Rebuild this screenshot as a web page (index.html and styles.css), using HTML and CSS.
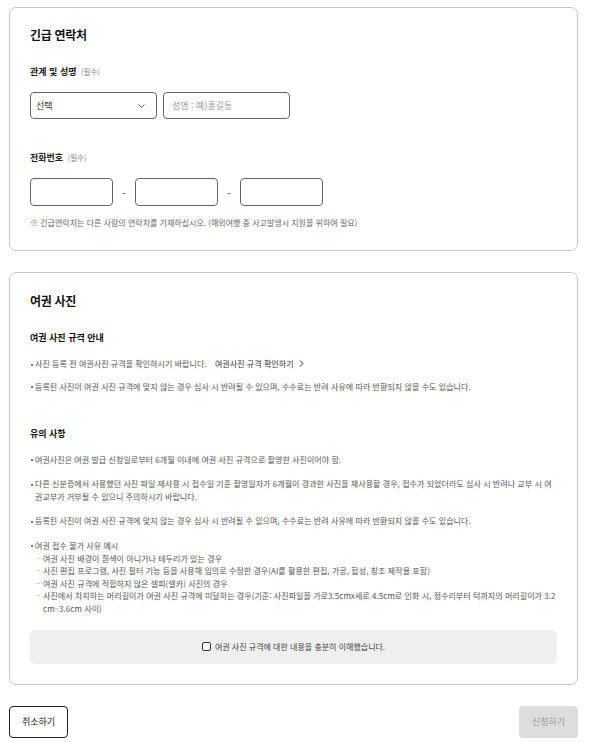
FILE: index.html
```html
<!DOCTYPE html>
<html lang="ko">
<head>
    <meta charset="UTF-8">
    <meta name="viewport" content="width=device-width, initial-scale=1.0">
    <title>여권 신청</title>
    <link rel="stylesheet" href="styles.css">
</head>
<body>

    <div class="page">
        <section class="card card-contact">
            <h2 class="card-title">긴급 연락처</h2>

            <p class="field-label">관계 및 성명 <span class="required">(필수)</span></p>
            <div class="row-name">
                <div class="select-box">
                    <span>선택</span>
                    <svg class="chevron-down" width="7" height="4" viewBox="0 0 7 4">
                        <path d="M0.5 0.5 L3.5 3.3 L6.5 0.5" fill="none" stroke="#555" stroke-width="1"/>
                    </svg>
                </div>
                <div class="text-box placeholder">성명 : 예)홍길동</div>
            </div>

            <p class="field-label label-phone">전화번호 <span class="required">(필수)</span></p>
            <div class="row-phone">
                <div class="phone-box"></div>
                <span class="dash">-</span>
                <div class="phone-box"></div>
                <span class="dash">-</span>
                <div class="phone-box"></div>
            </div>

            <p class="note">※ 긴급연락처는 다른 사람의 연락처를 기재하십시오. (해외여행 중 사고발생시 지원을 위하여 필요)</p>
        </section>

        <section class="card card-photo">
            <h2 class="card-title">여권 사진</h2>

            <h3 class="sub-title">여권 사진 규격 안내</h3>
            <ul class="info-list guide-list">
                <li>사진 등록 전 여권사진 규격을 확인하시기 바랍니다. <a class="guide-link">여권사진 규격 확인하기
                    <svg width="5" height="7" viewBox="0 0 5 7"><path d="M1 0.5 L4 3.5 L1 6.5" fill="none" stroke="#333" stroke-width="1"/></svg></a></li>
                <li>등록된 사진이 여권 사진 규격에 맞지 않는 경우 심사 시 반려될 수 있으며, 수수료는 반려 사유에 따라 반환되지 않을 수도 있습니다.</li>
            </ul>

            <h3 class="sub-title sub-notice">유의 사항</h3>
            <ul class="info-list">
                <li>여권사진은 여권 발급 신청일로부터 6개월 이내에 여권 사진 규격으로 촬영한 사진이어야 함.</li>
                <li>다른 신분증에서 사용했던 사진 파일 재사용 시 접수일 기준 촬영일자가 6개월이 경과한 사진을 재사용할 경우, 접수가 되었더라도 심사 시 반려나 교부 시 여권교부가 거부될 수 있으니 주의하시기 바랍니다.</li>
                <li>등록된 사진이 여권 사진 규격에 맞지 않는 경우 심사 시 반려될 수 있으며, 수수료는 반려 사유에 따라 반환되지 않을 수도 있습니다.</li>
                <li>여권 접수 불가 사유 예시
                    <ul class="sub-list">
                        <li>여권 사진 배경이 흰색이 아니거나 테두리가 있는 경우</li>
                        <li>사진 편집 프로그램, 사진 필터 기능 등을 사용해 임의로 수정한 경우(AI를 활용한 편집, 가공, 합성, 창조 제작물 포함)</li>
                        <li>여권 사진 규격에 적합하지 않은 셀피(셀카) 사진의 경우</li>
                        <li>사진에서 차지하는 머리길이가 여권 사진 규격에 미달하는 경우(기준: 사진파일을 가로3.5cmx세로 4.5cm로 인화 시, 정수리부터 턱까지의 머리길이가 3.2 cm~3.6cm 사이)</li>
                    </ul>
                </li>
            </ul>

            <label class="agree-box">
                <span class="check"></span>
                여권 사진 규격에 대한 내용을 충분히 이해했습니다.
            </label>
        </section>

        <div class="actions">
            <button class="btn btn-cancel">취소하기</button>
            <button class="btn btn-submit">신청하기</button>
        </div>
    </div>

</body>
</html>
```

FILE: styles.css
```css
body {
    margin: 0;
    font-family: "Noto Sans CJK KR", "Noto Sans", sans-serif;
    color: #222;
    background: #fff;
}
.page {
    width: 569px;
    padding: 7px 0 0 9px;
}
.card {
    border: 1px solid #c8c8c8;
    border-radius: 7px;
    padding: 19px 20px 21px 20px;
}
.card-photo {
    margin-top: 21px;
    padding-top: 20px;
    padding-bottom: 20px;
}
.card-title {
    margin: 0;
    font-size: 12px;
    line-height: 16px;
    font-weight: 700;
    letter-spacing: -0.3px;
    color: #111;
}
.field-label {
    margin: 22px 0 0;
    font-size: 9px;
    line-height: 14px;
    font-weight: 700;
}
.required {
    font-size: 7.5px;
    font-weight: 400;
    color: #888;
    margin-left: 2px;
}
.label-phone {
    margin-top: 32px;
}
.row-name {
    display: flex;
    gap: 6px;
    margin-top: 13px;
}
.select-box, .text-box {
    box-sizing: border-box;
    width: 127px;
    height: 27px;
    border: 1px solid #666;
    border-radius: 4px;
    padding: 0 8px 0 5px;
    display: flex;
    align-items: center;
    font-size: 9px;
    color: #333;
}
.select-box {
    justify-content: space-between;
}
.chevron-down {
    margin-right: 3px;
}
.placeholder {
    color: #999;
    padding-left: 8px;
}
.row-phone {
    display: flex;
    align-items: center;
    margin-top: 13px;
}
.phone-box {
    box-sizing: border-box;
    width: 83px;
    height: 28px;
    border: 1px solid #666;
    border-radius: 4px;
}
.dash {
    width: 22px;
    text-align: center;
    font-size: 10px;
    color: #333;
}
.note {
    margin: 11px 0 0;
    font-size: 8px;
    line-height: 12px;
    color: #666;
}
.sub-title {
    margin: 22px 0 0;
    font-size: 9px;
    line-height: 14px;
    font-weight: 700;
    color: #111;
}
.sub-notice {
    margin-top: 33px;
}
.info-list {
    list-style: none;
    margin: 13px 0 0;
    padding: 0;
    font-size: 8px;
    line-height: 12.6px;
    letter-spacing: 0.05px;
    color: #555;
}
.info-list > li {
    position: relative;
    padding-left: 5px;
}
.info-list > li::before {
    content: "";
    position: absolute;
    left: 1px;
    top: 5.5px;
    width: 2px;
    height: 2px;
    background: #777;
}
.info-list > li + li {
    margin-top: 12px;
}
.guide-list > li + li {
    margin-top: 10.4px;
}
.guide-link {
    color: #333;
    margin-left: 6px;
}
.guide-link svg {
    margin-left: 3px;
}
.sub-list {
    list-style: none;
    margin: 0;
    padding: 0 0 0 2px;
}
.sub-list li {
    padding-left: 6px;
    position: relative;
}
.sub-list li::before {
    content: "-";
    position: absolute;
    left: 0;
    color: #888;
}
.agree-box {
    display: flex;
    align-items: center;
    justify-content: center;
    gap: 4px;
    height: 34px;
    margin-top: 14px;
    background: #efefef;
    border-radius: 5px;
    font-size: 8px;
    color: #444;
}
.check {
    box-sizing: border-box;
    width: 9px;
    height: 9px;
    border: 1px solid #333;
    border-radius: 2px;
    background: #fff;
}
.actions {
    display: flex;
    justify-content: space-between;
    margin-top: 21px;
}
.btn {
    height: 32px;
    width: 59px;
    padding: 0;
    border-radius: 4px;
    font-family: inherit;
    font-size: 9px;
}
.btn-cancel {
    background: #fff;
    border: 1px solid #222;
    color: #222;
}
.btn-submit {
    background: #ddd;
    border: none;
    color: #999;
}
```
